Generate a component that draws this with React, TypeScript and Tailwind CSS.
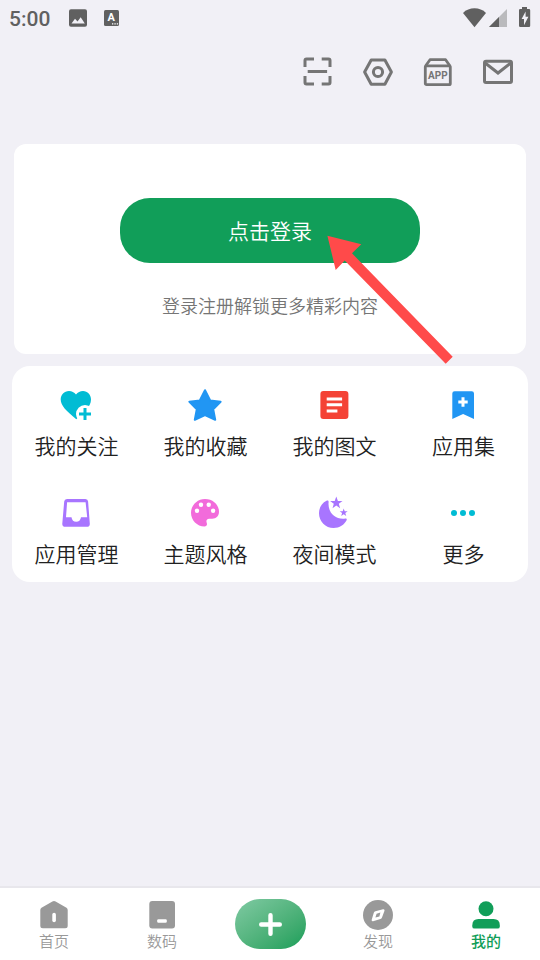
import type { ReactNode } from 'react';

const tiles: { label: string; icon: ReactNode }[] = [
  {
    label: '我的关注',
    icon: (
      <>
        <path d="M17 6.5C15.2 4.2 12.8 3 10 3C5.2 3 1.7 6.8 1.7 11.6C1.7 18 7.5 23 17.3 31.3L27 22C30.3 18.6 32 15.4 32 11.6C32 6.8 28.6 3 24 3C21.2 3 18.8 4.2 17 6.5Z" fill="#00bcd4" />
        <circle cx="26" cy="26" r="9" fill="#fff" />
        <path d="M26 20v12M20 26h12" stroke="#00bcd4" strokeWidth="3" />
      </>
    ),
  },
  {
    label: '我的收藏',
    icon: (
      <path d="M17 2.2L22.2 12.4L32.6 13.8L25.2 21.3L27.2 31.8L17 27L6.8 31.8L8.8 21.3L1.4 13.8L11.8 12.4Z" fill="#2196f3" stroke="#2196f3" strokeWidth="2" strokeLinejoin="round" />
    ),
  },
  {
    label: '我的图文',
    icon: (
      <>
        <rect x="3.4" y="3" width="28" height="28" rx="3" fill="#f44336" />
        <path d="M9.7 11h15.4M9.7 16.7h15.4M9.7 23h10.7" stroke="#fff" strokeWidth="3" />
      </>
    ),
  },
  {
    label: '应用集',
    icon: (
      <>
        <path d="M6.3 31V5.5Q6.3 3.2 8.6 3.2H25.7Q28 3.2 28 5.5V31L17.1 26Z" fill="#2196f3" />
        <path d="M17 9.3v9.4M12.3 14h9.4" stroke="#fff" strokeWidth="3" />
      </>
    ),
  },
  {
    label: '应用管理',
    icon: (
      <path fillRule="evenodd" d="M8 3H26.4Q28.9 3 29.1 5.5L30.8 27.6Q31 30.8 28 30.8H6.2Q3.1 30.8 3.3 27.6L5.2 5.5Q5.4 3 8 3ZM8.1 6.3L7 21.2H12.5Q13.2 25.8 17.2 25.8Q21.2 25.8 22 21.2H28.2L26.6 6.3Z" fill="#a875ff" />
    ),
  },
  {
    label: '主题风格',
    icon: (
      <>
        <path d="M17 3C9.2 3 3 9.2 3 16.8C3 24.4 9 30.5 16.5 30.5C18 30.5 19 29.5 19 28.3C19 27 18.4 26.3 18.4 25.2C18.4 23.7 19.6 22.8 21 22.8H24.2C28.4 22.8 31 19.8 31 15.8C31 8.8 25 3 17 3Z" fill="#f26bdb" />
        <g fill="#fff">
          <circle cx="9" cy="14.7" r="2.2" />
          <circle cx="13" cy="8.8" r="2.2" />
          <circle cx="20.7" cy="8.8" r="2.2" />
          <circle cx="25.1" cy="14.7" r="2.2" />
        </g>
      </>
    ),
  },
  {
    label: '夜间模式',
    icon: (
      <g fill="#a875ff">
        <path d="M9.5 4.8C5 6.8 2 11.6 2 17.2C2 25.4 8.6 32 16.6 32C22.5 32 27.4 28.8 29.6 24.3C30.1 23.1 29.4 22.4 28.2 22.6C18.5 24 10.5 16.5 11.6 6.2C11.7 4.9 10.8 4.3 9.5 4.8Z" />
        <path d="M19.3.5L20.9 5L25.5 5L21.8 7.8L23.1 12.3L19.3 9.6L15.5 12.3L16.8 7.8L13.1 5L17.7 5Z" />
        <path d="M26.7 12.4L27.7 15.2L30.7 15.3L28.3 17.1L29.2 20L26.7 18.2L24.2 20L25.1 17.1L22.7 15.3L25.7 15.2Z" />
      </g>
    ),
  },
  {
    label: '更多',
    icon: (
      <g fill="#00bcd4">
        <circle cx="8" cy="17" r="3" />
        <circle cx="17" cy="17" r="3" />
        <circle cx="26" cy="17" r="3" />
      </g>
    ),
  },
];

const tools: { label: string; icon: ReactNode }[] = [
  {
    label: '扫一扫',
    icon: <path d="M12 3H4.5Q3 3 3 4.5V11M19.7 3H26.5Q28 3 28 4.5V11M12 28H4.5Q3 28 3 26.5V20M19.7 28H26.5Q28 28 28 26.5V20M5.7 15.5h19.4" />,
  },
  {
    label: '设置',
    icon: (
      <>
        <path d="M9.2 4H22.9L29.4 16L22.9 28.3H9.2L2.6 16Z" strokeLinejoin="round" />
        <circle cx="16" cy="16" r="4.6" />
      </>
    ),
  },
  {
    label: '应用',
    icon: (
      <>
        <rect x="3.3" y="9.8" width="25" height="18.8" rx="1.2" strokeWidth="2.8" />
        <path d="M3.5 10L8 3.7H23.6L28 10" strokeWidth="2.8" strokeLinejoin="round" />
        <text x="15.8" y="23" textAnchor="middle" fill="#757575" stroke="none" className="text-[10px] font-bold">APP</text>
      </>
    ),
  },
  {
    label: '消息',
    icon: (
      <>
        <rect x="2.5" y="5.2" width="27" height="21.3" rx="1.5" />
        <path d="M3.5 7.2L16 17L28.5 7.2" />
      </>
    ),
  },
];

function NavItem({ label, active, children }: { label: string; active?: boolean; children: ReactNode }) {
  return (
    <a
      href="#"
      aria-current={active ? 'page' : undefined}
      className={`flex flex-1 flex-col items-center pt-[11px] ${active ? 'font-medium text-[#119e59]' : 'text-[#999999]'}`}
    >
      <svg viewBox="0 0 32 32" className="size-8" fill="currentColor">{children}</svg>
      <span className="text-[15px] leading-[22px]">{label}</span>
    </a>
  );
}

export default function App() {
  return (
    <div className="flex min-h-screen flex-col bg-[#f1f0f6] font-[Roboto,'Noto_Sans_CJK_SC',sans-serif] font-[350]">
      {/* Status bar */}
      <div className="flex h-9 items-center justify-between pr-[9px] pl-[9px] text-[#606060]">
        <div className="flex items-center">
          <span className="pt-px text-[21px] leading-6 font-medium">5:00</span>
          <svg viewBox="0 0 18 18" className="ml-[19px] size-[18px]">
            <rect width="18" height="17.5" y=".3" rx="2" fill="currentColor" />
            <path d="M2.5 14.5L6 9.8L8.5 12.6L11.7 8.3L15.8 14.5Z" fill="#f1f0f6" />
          </svg>
          <svg viewBox="0 0 15 18" className="ml-[17px] h-[18px] w-[15px]">
            <rect y="1" width="15" height="16" rx="1.5" fill="currentColor" />
            <text x="7.2" y="12" textAnchor="middle" fill="#fff" className="text-[11px] font-bold">A</text>
            <path d="M8 14.8h1.3M10.4 14.8h1.3M12.8 14.8h1.3" stroke="#fff" strokeWidth="1.3" />
          </svg>
        </div>
        <div className="flex items-center">
          <svg viewBox="0 0 23 20" className="h-5 w-[23px]" fill="currentColor">
            <path d="M0 5C6-1.2 17-1.2 23 5L11.5 19.2Z" />
          </svg>
          <svg viewBox="0 0 18 20" className="ml-[3px] h-5 w-[18px]" fill="currentColor">
            <path d="M0 19L18 1V19Z" opacity=".38" />
            <path d="M0 19L10 9V19Z" />
          </svg>
          <svg viewBox="0 0 12 22" className="ml-3 h-[22px] w-3" fill="currentColor">
            <path d="M3 0H8V2H10Q11.2 2 11.2 3.2V18.8Q11.2 20 10 20H1.2Q0 20 0 18.8V3.2Q0 2 1.2 2H3Z" />
            <path d="M6.6 4.5L2.6 12H5V18.2L9.4 9.8H6.6Z" fill="#f1f0f6" />
          </svg>
        </div>
      </div>

      {/* Toolbar */}
      <header className="flex h-[72px] justify-end pr-3">
        {tools.map((tool) => (
          <button key={tool.label} type="button" aria-label={tool.label} className="flex w-15 items-center justify-center">
            <svg viewBox="0 0 32 32" className="size-8" fill="none" stroke="#757575" strokeWidth="3">{tool.icon}</svg>
          </button>
        ))}
      </header>

      <main className="flex flex-1 flex-col px-3 pt-9">
        {/* Login card */}
        <section className="relative mx-0.5 flex h-[210px] flex-col items-center rounded-xl bg-white pt-[54px]">
          <button type="button" className="h-[65px] w-[300px] rounded-[30px] bg-[#119e59] pt-1 text-[21px] text-white">
            点击登录
          </button>
          <p className="mt-[31px] text-lg leading-[26px] text-[#757575]">登录注册解锁更多精彩内容</p>
          <svg
            viewBox="327 235 126 129"
            className="pointer-events-none absolute top-[91px] left-[calc(50%+57px)] z-10 h-[129px] w-[126px]"
            fill="#ff4a4a"
          >
            <path d="M327.4 235.7L361.3 244.3L352 253.3L452.7 356.7L445.7 363.7L344.7 260.5L335.7 270Z" />
          </svg>
        </section>

        {/* Shortcuts */}
        <section className="mt-3 grid grid-cols-4 rounded-[18px] bg-white">
          {tiles.map((tile) => (
            <button key={tile.label} type="button" className="flex h-[108px] flex-col items-center pt-[22px]">
              <svg viewBox="0 0 35 35" className="size-[35px]">{tile.icon}</svg>
              <span className="mt-2 text-[21px] leading-8 text-[#212121]">{tile.label}</span>
            </button>
          ))}
        </section>
      </main>

      {/* Bottom navigation */}
      <nav className="flex h-[74px] border-t-2 border-[#e8e7ec] bg-white">
        <NavItem label="首页">
          <path d="M16 2Q16.8 2 17.6 2.5L28.5 8.8Q29.7 9.6 29.7 11V26.8Q29.7 29.3 27.2 29.3H4.8Q2.3 29.3 2.3 26.8V11Q2.3 9.6 3.5 8.8L14.4 2.5Q15.2 2 16 2Z" />
          <rect x="14.3" y="13.7" width="3.6" height="9.6" rx="1.8" fill="#fff" />
        </NavItem>
        <NavItem label="数码">
          <rect x="3.3" y="2" width="25.7" height="27.5" rx="3" />
          <rect x="11.2" y="20.2" width="9.6" height="3.6" rx="1.2" fill="#fff" />
        </NavItem>
        <div className="flex flex-1 justify-center pt-[11px]">
          <button type="button" aria-label="发布" className="flex h-[50px] w-[71px] items-center justify-center rounded-full bg-linear-to-br from-[#7fcaa3] to-[#119e59]">
            <svg viewBox="0 0 25 25" className="size-[25px]" stroke="#fff" strokeWidth="4.4" strokeLinecap="round">
              <path d="M12.5 3.2v18.6M3.2 12.5h18.6" />
            </svg>
          </button>
        </div>
        <NavItem label="发现">
          <circle cx="16" cy="16" r="15" />
          <path d="M21 10.2L13.4 12.2Q12.2 12.6 11.8 13.8L9.7 20.8Q9.3 22.6 11.1 22.2L18.4 20.1Q19.6 19.7 20 18.5L22.5 11.7Q22.9 9.8 21 10.2Z" fill="#fff" />
          <path d="M18.4 13.6L17.4 17.5L13.4 18.6L14.6 14.7Z" />
        </NavItem>
        <NavItem label="我的" active>
          <circle cx="16" cy="9.8" r="7.5" />
          <path d="M8.5 20H23.5Q29.8 20 29.8 26.2V27.4Q29.8 29.6 27.6 29.6H4.5Q2.3 29.6 2.3 27.4V26.2Q2.3 20 8.5 20Z" />
        </NavItem>
      </nav>
    </div>
  );
}
